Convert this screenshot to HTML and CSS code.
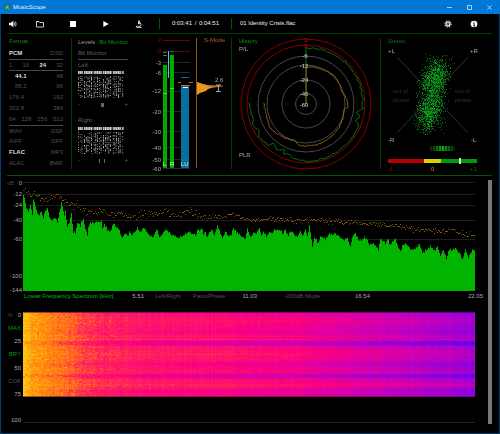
FILE: index.html
```html
<!DOCTYPE html>
<html lang="en">
<head>
    <meta charset="UTF-8">
    <meta name="viewport" content="width=device-width, initial-scale=1.0">
    <title>MusicScope</title>
    <link rel="stylesheet" href="styles.css">
</head>
<body>
<div class="window">
    <header class="titlebar">
        <svg class="app-icon" viewBox="0 0 7 7">
            <circle cx="3.5" cy="3.5" r="3.4" fill="#12705f"/>
            <path d="M2 5.5 3 2.2 3.8 1.3 4.2 3 3.7 4.2 5.3 5.6M1.8 3.4H3" fill="none" stroke="#9fd6c4" stroke-width=".8"/>
        </svg>
        <h1>MusicScope</h1>
        <div class="window-buttons">
            <button aria-label="Minimize"><svg viewBox="0 0 5 5"><path d="M0 2.5H5"/></svg></button>
            <button aria-label="Maximize"><svg viewBox="0 0 5 5"><path d="M.5 .5H4.5V4.5H.5Z"/></svg></button>
            <button aria-label="Close"><svg viewBox="0 0 5 5"><path d="M.4 .4 4.6 4.6M4.6 .4 .4 4.6"/></svg></button>
        </div>
    </header>

    <nav class="toolbar">
        <div class="transport">
            <button class="volume" aria-label="Volume">
                <svg viewBox="0 0 8 8"><path d="M0 2.7H1.8L4.4 .8V7.2L1.8 5.3H0Z" fill="#eee"/><path d="M5.3 2.5Q6 4 5.3 5.5M6.4 1.5Q8 4 6.4 6.5" fill="none" stroke="#ddd" stroke-width=".8"/></svg>
            </button>
            <button aria-label="Open">
                <svg viewBox="0 0 8 8"><path d="M.5 7V1.5H3L3.7 2.5H7.5V7Z" fill="none" stroke="#ddd" stroke-width=".9"/><path d="M.5 1.6H3" stroke="#ddd"/></svg>
            </button>
            <button aria-label="Stop">
                <svg viewBox="0 0 8 8"><path d="M1 1H7V7H1Z" fill="#fff"/></svg>
            </button>
            <button aria-label="Play">
                <svg viewBox="0 0 8 8"><path d="M1.3 1 6.8 4 1.3 7Z" fill="#fff"/></svg>
            </button>
            <button aria-label="Analyze">
                <svg viewBox="0 0 8 8"><path d="M3.2 .4H4.8V3.6L3.9 4.6 3 3.6Z" fill="#ddd"/><path d="M1.2 7.4H6.8M2 5.6 1 7.2M5 2.4Q7.2 4.6 5 6.4H2.6" fill="none" stroke="#ddd" stroke-width=".9"/></svg>
            </button>
        </div>
        <div class="time"><span>0:03:41</span><span>/</span><span>0:04:51</span></div>
        <div class="track">01 Identity Crisis.flac</div>
        <div class="extras">
            <button aria-label="Settings">
                <svg viewBox="0 0 8 8"><circle cx="4" cy="4" r="2" fill="#666" stroke="#ddd" stroke-width="1.1"/><circle cx="4" cy="4" r="3" fill="none" stroke="#ddd" stroke-width="1.2" stroke-dasharray="1.3 1.056"/></svg>
            </button>
            <button aria-label="Info">
                <svg viewBox="0 0 8 8"><circle cx="4" cy="4" r="3.3" fill="#fff"/><path d="M4 1.6V2.7M3.3 3.6H4.2V6M3.2 6H5" fill="none" stroke="#000" stroke-width=".9"/></svg>
            </button>
        </div>
    </nav>

    <section class="panels">
        <div class="panel format">
            <h2 class="green">Format</h2>
            <div class="row"><b>PCM</b><span>DSD</span></div>
            <div class="row lined"><span>1</span><span>16</span><b>24</b><span>32</span></div>
            <div class="row lined indent"><b>44.1</b><span>48</span></div>
            <div class="row indent"><span>88.2</span><span>96</span></div>
            <div class="row"><span>176.4</span><span>192</span></div>
            <div class="row"><span>352.8</span><span>384</span></div>
            <div class="row"><span>64</span><span>128</span><span>256</span><span>512</span></div>
            <div class="row lined"><span>WAV</span><span>DSF</span></div>
            <div class="row"><span>AIFF</span><span>DFF</span></div>
            <div class="row"><b>FLAC</b><span>MP3</span></div>
            <div class="row"><span>ALAC</span><span>BWF</span></div>
        </div>

        <div class="panel levels">
            <div class="tabs">
                <button>Levels</button>
                <button class="green">Bit Monitor</button>
            </div>
            <div class="row">Bit Monitor</div>
            <div class="row lined">Left</div>
            <canvas class="bits" id="bitsLeft" width="53" height="29"></canvas>
            <div class="row shift"><span>-</span><i class="mark"></i><span>+</span></div>
            <div class="row second">Right</div>
            <canvas class="bits" id="bitsRight" width="53" height="29"></canvas>
            <div class="row shift"><span>-</span><i class="mark wide"></i><span>+</span></div>
        </div>

        <div class="panel meter">
            <svg viewBox="146 34 85 141">
                <g stroke="#262626">
                    <path d="M163 62.5H190M163 72.5H190M163 91.5H190M163 111.5H190M163 131.5H190M163 147.5H190M163 159.5H190M163 168.5H190"/>
                </g>
                <path d="M163 40.5H190M163 51.5H190" stroke="#5c0606"/>
                <g class="scale" text-anchor="end">
                    <text x="161" y="42" class="red">3</text>
                    <text x="161" y="53" class="red">0</text>
                    <text x="161" y="65">-3</text>
                    <text x="161" y="75">-6</text>
                    <text x="161" y="93">-12</text>
                    <text x="161" y="114">-20</text>
                    <text x="161" y="134">-30</text>
                    <text x="161" y="150">-40</text>
                    <text x="161" y="162">-50</text>
                    <text x="161" y="171">-60</text>
                </g>
                <rect x="163" y="65" width="4" height="103" fill="#0a0"/>
                <rect x="170" y="55" width="4" height="113" fill="#0a0"/>
                <path d="M163 52.5H167M163 55.5H167M170 51.5H174" stroke="#078a3a"/>
                <path d="M163 93.5H167M170 88.5H174" stroke="#1f2"/>
                <rect x="168" y="51" width="1" height="27" fill="#4fc3e8"/>
                <rect x="181" y="85" width="8" height="83" fill="#07719c"/>
                <path d="M181 77.5H189" stroke="#07719c"/>
                <path d="M178 82.5H181M189 82.5H193M181 85.5H190" stroke="#b8721a"/>
                <path d="M183 87.5H188" stroke="#fff"/>
                <g class="bar-names">
                    <text x="163" y="166">L</text>
                    <text x="170" y="166">R</text>
                    <text x="181" y="166">LU</text>
                </g>
                <path d="M196.5 38V168" stroke="#8a5410"/>
                <path d="M197 82 200 83 203 84 207 85 216 86 223 86.5 213 87.5 208 89 206 91 203 92 200 93 197 95Z" fill="#e8981c"/>
                <path d="M207 86H223" stroke="#a56a18"/>
                <path d="M218.5 85V91M216 85H221M216 91.5H221" stroke="#ccc" stroke-width=".8"/>
                <text x="215" y="82" class="value">2.6</text>
                <text x="204" y="42" class="orange">S-Mode</text>
            </svg>
        </div>

        <div class="panel history">
            <svg viewBox="231 34 149 141">
                <g fill="none">
                    <circle cx="306" cy="104" r="65" stroke="#800"/>
                    <circle cx="306" cy="104" r="59" stroke="#800"/>
                    <circle cx="306" cy="104" r="48" stroke="#484848"/>
                    <circle cx="306" cy="104" r="39" stroke="#484848"/>
                    <circle cx="306" cy="104" r="24" stroke="#484848"/>
                    <circle cx="306" cy="104" r="10.5" stroke="#484848"/>
                    <path id="peakTrace" stroke="#087a14" stroke-width=".9"/>
                    <path id="loudTrace" stroke="#9a641c" stroke-width=".9"/>
                </g>
                <g class="scale rings" text-anchor="middle">
                    <text x="306" y="42" class="red">3</text>
                    <text x="306" y="48" class="red">0</text>
                    <text x="305" y="58">-6</text>
                    <text x="304" y="68">-12</text>
                    <text x="304" y="82">-24</text>
                    <text x="304" y="96">-40</text>
                    <text x="304" y="107">-60</text>
                </g>
                <text x="239" y="43" class="green">History</text>
                <text x="239" y="51" class="value">P/L</text>
                <text x="239" y="157" class="value">PLR</text>
            </svg>
        </div>

        <div class="panel stereo">
            <svg viewBox="380 34 112 141">
                <path d="M397 57 468 133M468 57 397 133" stroke="#303030"/>
                <g id="scope"></g>
                <text x="388" y="43" class="dark-green">Stereo</text>
                <g class="scale">
                    <text x="388" y="53">+L</text>
                    <text x="470" y="53">+R</text>
                    <text x="388" y="142">-R</text>
                    <text x="471" y="142">-L</text>
                </g>
                <g class="faint">
                    <text x="393" y="93">out of</text>
                    <text x="393" y="102">phase</text>
                    <text x="455" y="93">out of</text>
                    <text x="455" y="102">phase</text>
                </g>
                <g id="ticks"></g>
                <rect x="388" y="159" width="36" height="4" fill="#b80000"/>
                <rect x="424" y="159" width="17" height="4" fill="#d8d000"/>
                <rect x="441" y="159" width="36" height="4" fill="#009a10"/>
                <rect x="459" y="158" width="2" height="6" fill="#ddd"/>
                <text x="388" y="171" class="red">-1</text>
                <text x="431" y="171" class="yellow">0</text>
                <text x="470" y="171" class="dark-green">+1</text>
            </svg>
        </div>
    </section>

    <main class="analysis">
        <div class="charts">
            <div class="chart">
                <svg class="axis" viewBox="0 0 22 109">
                    <text x="6" y="3" class="dim">dB</text>
                    <g class="scale" text-anchor="end">
                        <text x="21" y="3">0</text>
                        <text x="21" y="14">-12</text>
                        <text x="21" y="25">-24</text>
                        <text x="21" y="40">-40</text>
                        <text x="21" y="59">-60</text>
                        <text x="21" y="96">-100</text>
                        <text x="21" y="110">-144</text>
                    </g>
                </svg>
                <canvas class="plot" id="spectrum" width="452" height="109"></canvas>
            </div>
            <div class="freq-axis">
                <div>
                    <span class="green name">Linear Frequency Spectrum [kHz]</span>
                    <span class="tick">5.51</span>
                </div>
                <div>
                    <button>Left/Right</button>
                    <button>Pano/Phase</button>
                    <span class="tick">11.03</span>
                </div>
                <div>
                    <button class="mode">-200dB Mode</button>
                    <span class="tick">16.54</span>
                </div>
                <div>
                    <span class="tick">22.05</span>
                </div>
            </div>
            <div class="chart time-chart">
                <div class="side">
                    <div><span class="dim">%</span><span>0</span></div>
                    <button class="green">MAX</button>
                    <span>25</span>
                    <button class="green">BRY</button>
                    <span>50</span>
                    <button>COF</button>
                    <span>75</span>
                    <i></i>
                    <span>100</span>
                </div>
                <div class="spectrogram">
                    <canvas class="plot" id="spectrogram" width="452" height="85"></canvas>
                </div>
            </div>
        </div>
        <div class="scrollbar"></div>
    </main>
</div>
<script src="script.js"></script>
</body>
</html>
```
FILE: styles.css
```css
* {
    box-sizing: border-box;
}

body {
    margin: 0;
    background-color: #000;
    color: #aaa;
    font-family: "Liberation Sans", Arial, sans-serif;
    font-size: 6px;
    line-height: 7px;
}

button {
    padding: 0;
    border: none;
    background: none;
    color: #555;
    font: inherit;
    cursor: pointer;
}

button svg,
.panel svg,
canvas {
    display: block;
}

h1,
h2 {
    margin: 0;
    font-size: inherit;
    font-weight: normal;
}

.window {
    min-height: 100vh;
    border: 1px solid #003d6e;
    border-top: none;
}

.titlebar {
    display: flex;
    align-items: center;
    height: 14px;
    margin: 0 -1px;
    padding: 0 8px 0 4px;
    background-color: #0078d7;
    color: #e5f1fb;
}

.titlebar h1 {
    padding-left: 2px;
}

.app-icon {
    width: 7px;
    height: 7px;
}

.window-buttons {
    display: flex;
    gap: 15px;
    margin-left: auto;
}

.window-buttons svg {
    width: 5px;
    height: 5px;
    fill: none;
    stroke: #cfe5f8;
    stroke-width: 0.8;
}

.toolbar {
    display: flex;
    align-items: center;
    height: 20px;
    margin: 0 7px 0 6px;
    padding-right: 14px;
    border-bottom: 1px solid #043d04;
    color: #eee;
}

.toolbar svg {
    width: 8px;
    height: 8px;
}

.transport {
    display: flex;
    gap: 25px;
    padding-left: 2px;
}

.transport .volume {
    margin-right: -6px;
}

.time,
.track {
    display: flex;
    align-items: center;
    height: 11px;
    border-left: 1px solid #055205;
}

.time {
    justify-content: space-between;
    width: 72px;
    margin-left: 16px;
    padding: 0 12px;
}

.track {
    padding-left: 8px;
}

.extras {
    display: flex;
    gap: 18px;
    margin-left: auto;
}

.panels {
    display: grid;
    grid-template-columns: 64fr 75fr 85fr 149fr 112fr;
    margin: 0 7px 0 6px;
    border-bottom: 1px solid #055205;
}

.panel {
    position: relative;
    min-width: 0;
}

/* short divider lines between the panels */
.panel + .panel::before {
    content: "";
    position: absolute;
    top: 4px;
    bottom: 6px;
    left: 0;
    width: 1px;
    background-color: #043d04;
}

.panel.meter::before {
    display: none;
}

.panel svg {
    width: 100%;
}

.format {
    padding: 3px 8px 0 2px;
    color: #505050;
}

.format h2,
.tabs {
    height: 11px;
    line-height: 9px;
}

.format b {
    color: #ddd;
}

.row {
    display: flex;
    justify-content: space-between;
    height: 11px;
    line-height: 11px;
}

.lined {
    border-top: 1px solid #484848;
}

.indent {
    padding-left: 6px;
}

.levels {
    padding: 3px 18px 0 7px;
    color: #606060;
}

.tabs {
    display: flex;
    justify-content: space-between;
    white-space: nowrap;
}

.tabs button {
    color: #999;
}

.bits {
    width: 100%;
    height: 29px;
    padding-right: 4px;
}

.row.shift {
    align-items: center;
}

.mark {
    width: 3px;
    height: 4px;
    background-color: #666;
}

.mark.wide {
    width: 6px;
    border: solid #666;
    border-width: 0 1px;
    background: none;
}

.row.second {
    margin-top: 5px;
}

svg text {
    font-size: 6px;
}

.scale,
.value {
    fill: #aaa;
}

.bar-names {
    fill: #d5f0d5;
}

.rings {
    font-weight: bold;
}

.dim {
    fill: #444;
    color: #444;
}

.faint {
    fill: #303030;
}

.orange {
    fill: #a56a18;
}

.yellow {
    fill: #a8a000;
}

.red {
    fill: #a00000;
}

.dark-green {
    fill: #087508;
}

.green,
.tabs button.green,
.side button.green {
    fill: #0a970a;
    color: #0a970a;
}

.analysis {
    display: flex;
    gap: 13px;
    padding: 4px 7px 4px 0;
}

.charts {
    flex: 1;
    padding-top: 2px;
}

.chart {
    display: flex;
}

.axis {
    flex: none;
    width: 22px;
    height: 109px;
    overflow: visible;
}

.plot {
    flex: 1;
    width: 100%;
    min-width: 0;
    height: 109px;
}

/* four equal steps, each one ends under its tick */
.freq-axis {
    display: grid;
    grid-template-columns: repeat(4, 1fr);
    height: 11px;
    margin: 0 -8px 0 30px;
    line-height: 11px;
    white-space: nowrap;
}

.freq-axis div {
    display: flex;
    gap: 12px;
    padding-left: 11px;
}

.freq-axis div:first-child {
    padding-left: 0;
}

.freq-axis .name {
    margin-left: -7px;
    color: #0b0;
}

.freq-axis .mode {
    margin-left: 16px;
}

.freq-axis .tick {
    margin-left: auto;
}

.time-chart {
    margin-top: 10px;
}

.side {
    display: flex;
    flex-direction: column;
    align-items: flex-end;
    justify-content: space-between;
    width: 22px;
    height: 112px;
    padding-right: 2px;
}

.side div {
    display: flex;
    gap: 5px;
}

.side i {
    height: 7px;
}

.spectrogram {
    flex: 1;
    height: 111px;
    border-bottom: 1px solid #222;
}

.spectrogram .plot {
    height: 85px;
}

.scrollbar {
    width: 4px;
    background-color: #777;
}
```
FILE: script.js
```js
let seed = 7;

function rnd() {
    seed = (seed * 1664525 + 1013904223) % 4294967296;
    return seed / 4294967296;
}

// roughly normal, -1..1
function noise() {
    return (rnd() + rnd() + rnd()) / 1.5 - 1;
}

function lerp(points, x) {
    for (let i = 1; i < points.length; i++) {
        if (x <= points[i][0]) {
            const a = points[i - 1];
            const b = points[i];
            const t = (x - a[0]) / (b[0] - a[0]);
            return a.slice(1).map((v, k) => v + (b[k + 1] - v) * t);
        }
    }
    return points[points.length - 1].slice(1);
}

function drawBits(id) {
    const ctx = document.getElementById(id).getContext('2d');
    for (let i = 0; i < 24; i++) {
        const x = Math.round(i * 2.2);
        ctx.fillStyle = '#ddd';
        ctx.fillRect(x, 1, 1, 3);
        ctx.fillStyle = '#777';
        ctx.fillRect(x + 1, 1, 1, 3);
        for (let y = 6; y < 28; y++) {
            const level = i < 4 ? rnd() * 0.75 : rnd();
            if (level > 0.35) {
                const c = Math.round(50 + rnd() * 150);
                ctx.fillStyle = `rgb(${c},${c},${c})`;
                ctx.fillRect(x, y, 1, 1);
            }
        }
    }
}

const levels = [
    [0, 12], [1, 16], [3, 26], [5, 30], [7, 24], [9, 31], [10, 17], [12, 25], [14, 31], [16, 33], [18, 28],
    [20, 37], [22, 29], [24, 26], [26, 34], [28, 39], [30, 36], [32, 37], [34, 39], [36, 31], [38, 21],
    [40, 29], [41, 34], [42, 30], [44, 44], [46, 40], [48, 33], [50, 50], [52, 51], [54, 40], [57, 43],
    [60, 37], [62, 47], [64, 52], [65, 44], [67, 41], [71, 40], [78, 39], [79, 47], [81, 42], [83, 46],
    [87, 50], [90, 41], [92, 44], [96, 48], [98, 55], [100, 53], [102, 51], [104, 54], [106, 49],
    [108, 55], [111, 50], [114, 46], [117, 50], [120, 46], [124, 50], [127, 54], [130, 55], [133, 48],
    [136, 54], [139, 53], [142, 48], [148, 52], [154, 56], [160, 53], [166, 50], [172, 53], [174, 47],
    [176, 49], [178, 46], [180, 51], [182, 49], [184, 56], [186, 50], [189, 47], [191, 53], [194, 45],
    [197, 51], [199, 56], [202, 49], [205, 54], [208, 52], [210, 46], [213, 50], [218, 54], [222, 58],
    [224, 46], [227, 56], [231, 50], [233, 53], [236, 45], [238, 54], [240, 50], [243, 54], [246, 50],
    [249, 51], [251, 48], [257, 49], [260, 51], [262, 48], [264, 53], [269, 49], [272, 54], [275, 53],
    [277, 48], [279, 53], [282, 48], [284, 53], [286, 44], [289, 65], [291, 56], [295, 60], [297, 55],
    [302, 57], [305, 52], [311, 53], [315, 54], [321, 58], [324, 56], [327, 65], [329, 54], [332, 51],
    [335, 58], [343, 56], [346, 63], [349, 61], [352, 63], [355, 69], [357, 56], [362, 61], [364, 57],
    [367, 62], [372, 56], [374, 64], [377, 70], [379, 64], [383, 62], [388, 68], [393, 66], [396, 62],
    [399, 70], [404, 67], [407, 65], [410, 68], [414, 65], [417, 74], [420, 69], [423, 77], [426, 67],
    [429, 68], [432, 66], [436, 71], [439, 77], [442, 68], [445, 75], [448, 69], [452, 68]
];

const peaks = [
    [0, 6], [2, 9], [6, 12], [15, 13], [20, 17], [28, 16], [36, 12], [41, 19], [44, 20], [50, 25],
    [54, 20], [60, 28], [72, 31], [82, 29], [85, 34], [95, 30], [105, 34], [115, 34], [123, 31],
    [132, 33], [142, 28], [152, 34], [165, 29], [180, 34], [187, 34], [200, 35], [210, 30],
    [220, 36], [235, 38], [247, 37], [260, 37], [275, 39], [290, 37], [307, 39], [330, 40], [357, 42],
    [380, 45], [400, 47], [417, 48], [430, 48], [442, 52], [452, 52]
];

function drawSpectrum() {
    const ctx = document.getElementById('spectrum').getContext('2d');
    ctx.fillStyle = '#1e1e1e';
    [0, 12, 23, 38, 57].forEach(y => ctx.fillRect(0, y, 452, 1));
    for (let x = 0; x < 452; x++) {
        const y = lerp(levels, x)[0] + noise() * 2.5;
        ctx.fillStyle = '#00b400';
        ctx.fillRect(x, y, 1, 109 - y);
        ctx.fillStyle = rnd() > 0.4 ? '#86600c' : '#543a06';
        const spread = x < 200 ? 6 : 4;
        ctx.fillRect(x, Math.round(lerp(peaks, x)[0] + noise() * spread), 1, 1);
    }
}

// energy 0..1 -> colour, purple is quiet and yellow is loud
const heat = [
    [0, 80, 0, 255], [0.2, 145, 0, 220], [0.38, 205, 0, 180], [0.55, 250, 0, 130],
    [0.7, 255, 35, 90], [0.82, 255, 110, 30], [0.92, 255, 150, 10], [1, 255, 195, 20]
];

const energy = [
    [0, 1], [10, 0.93], [25, 0.87], [42, 0.83], [60, 0.74], [80, 0.69], [120, 0.64],
    [200, 0.59], [270, 0.53], [320, 0.45], [380, 0.36], [430, 0.28], [452, 0.23]
];

// slow loudness changes of the song, by row
const loudness = [
    [0, -0.06], [8, 0.04], [18, -0.02], [20, -0.06], [27, 0.06], [29, -0.14], [32, -0.16], [34, 0.02],
    [45, 0.06], [52, -0.06], [58, 0.04], [61, 0.02], [63, -0.17], [65, -0.12], [67, 0.03],
    [74, 0.07], [79, -0.08], [85, 0.05]
];

function drawSpectrogram() {
    const ctx = document.getElementById('spectrogram').getContext('2d');
    const columns = [];
    for (let x = 0; x < 452; x++) {
        columns.push(noise() * 0.04);
    }
    for (let y = 0; y < 85; y++) {
        const row = lerp(loudness, y)[0] + noise() * 0.06;
        let cell = 0;
        for (let x = 0; x < 452; x++) {
            if (x % 2 === 0) {
                cell = noise() * (x < 100 ? 0.1 : 0.06);
            }
            const fade = Math.min(1, x / 250 + 0.2);
            const v = lerp(energy, x)[0] + row * fade + columns[x] + cell;
            const c = lerp(heat, Math.max(0, Math.min(1, v))).map(Math.round);
            ctx.fillStyle = `rgb(${c})`;
            ctx.fillRect(x, y, 1, 1);
        }
    }
    ctx.fillStyle = 'rgba(60, 0, 60, 0.5)';
    ctx.fillRect(0, 0, 452, 1);
    ctx.fillRect(0, 84, 452, 1);
}

// radius by angle in degrees, clockwise from the top
function drawTrace(id, radii, spread) {
    let d = 'M306 104';
    for (let a = 0; a <= 272; a += 1.5) {
        const r = lerp(radii, a)[0] + noise() * spread;
        const t = a * Math.PI / 180;
        d += `L${(306 + r * Math.sin(t)).toFixed(1)} ${(104 - r * Math.cos(t)).toFixed(1)}`;
    }
    document.getElementById(id).setAttribute('d', d);
}

function svgRect(parent, x, y, width, height, fill, opacity) {
    const rect = document.createElementNS('http://www.w3.org/2000/svg', 'rect');
    Object.entries({ x, y, width, height, fill, opacity }).forEach(([k, v]) => rect.setAttribute(k, v));
    parent.appendChild(rect);
}

// two overlapping clouds, the upper one leans to the right
function drawScope() {
    const scope = document.getElementById('scope');
    for (let i = 0; i < 2200; i++) {
        const upper = i % 2 === 0;
        const y = Math.round((upper ? 78 : 110) + noise() * 29);
        const lean = (95 - y) * 0.16;
        const x = Math.round(432 + lean + noise() * 19);
        if (y > 52 && y < 137) {
            svgRect(scope, x, y, 1, 1, rnd() > 0.85 ? '#18c828' : '#0c8c18', (0.25 + rnd() * 0.6).toFixed(2));
        }
    }
    const ticks = document.getElementById('ticks');
    for (let x = 429; x < 455; x++) {
        const near = 1 - Math.abs(x - 442) / 16;
        svgRect(ticks, x, 146, 1, 5, '#12c020', (near * (x % 3 ? 0.9 : 0.3)).toFixed(2));
    }
}

drawBits('bitsLeft');
drawBits('bitsRight');
drawSpectrum();
drawSpectrogram();
drawTrace('peakTrace', [
    [0, 56], [40, 57], [80, 57], [95, 56], [100, 51], [103, 56], [108, 52], [112, 57], [180, 57],
    [194, 56], [197, 52], [204, 55], [206, 50], [212, 54], [220, 50], [221, 56], [238, 57],
    [241, 53], [246, 57], [255, 55], [272, 57]
], 1.4);
drawTrace('loudTrace', [
    [0, 37], [20, 38], [45, 40], [70, 38], [85, 41], [95, 42], [98, 38], [115, 40], [140, 41], [165, 42],
    [190, 42], [197, 38], [215, 40], [235, 43], [255, 41], [272, 42]
], 1);
drawScope();
```
